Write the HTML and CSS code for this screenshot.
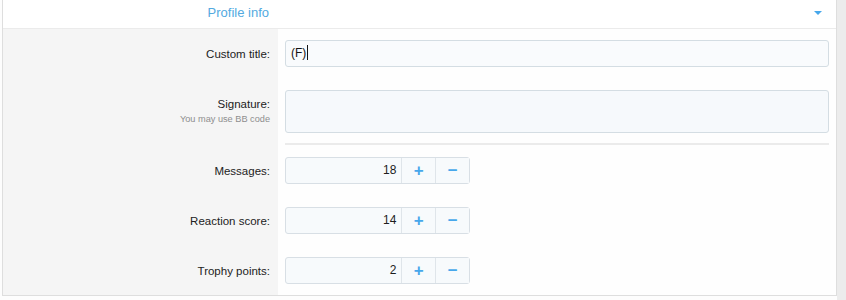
FILE: index.html
```html
<!DOCTYPE html>
<html lang="en">
<head>
  <meta charset="UTF-8">
  <title>Profile info</title>
  <meta name="viewport" content="width=device-width, initial-scale=1" />
  <link rel="stylesheet" href="styles.css">
</head>
<body>
  <div class="panel">
    <h2 class="block-header">
      <span class="header-title">Profile info</span>
      <span class="header-toggle"></span>
    </h2>

    <dl class="form-row">
      <dt><label>Custom title:</label></dt>
      <dd><div class="input-text">(F)<span class="caret"></span></div></dd>
    </dl>

    <dl class="form-row form-row--last">
      <dt>
        <label>Signature:</label>
        <div class="hint">You may use BB code</div>
      </dt>
      <dd><div class="input-area"></div></dd>
    </dl>

    <dl class="form-sep">
      <dt></dt>
      <dd><hr></dd>
    </dl>

    <dl class="form-row form-row--spin">
      <dt><label>Messages:</label></dt>
      <dd>
        <div class="spinbox">
          <span class="spin-value">18</span>
          <button class="spin-btn">+</button>
          <button class="spin-btn">&minus;</button>
        </div>
      </dd>
    </dl>

    <dl class="form-row form-row--spin">
      <dt><label>Reaction score:</label></dt>
      <dd>
        <div class="spinbox">
          <span class="spin-value">14</span>
          <button class="spin-btn">+</button>
          <button class="spin-btn">&minus;</button>
        </div>
      </dd>
    </dl>

    <dl class="form-row form-row--spin">
      <dt><label>Trophy points:</label></dt>
      <dd>
        <div class="spinbox">
          <span class="spin-value">2</span>
          <button class="spin-btn">+</button>
          <button class="spin-btn">&minus;</button>
        </div>
      </dd>
    </dl>
  </div>
  <div class="scroll-track"></div>
</body>
</html>
```

FILE: styles.css
```css
html, body { margin: 0; height: 300px; }
body { display: flex; align-items: flex-start; background: #fdfdfd; font-family: "Liberation Sans", Arial, sans-serif; color: #1d1d1d; overflow: hidden; }

.panel { width: 833px; margin-left: 2px; border-left: 1px solid #dedede; border-right: 1px solid #dedede; border-bottom: 1px solid #dedede; background: #fefefe; }
.scroll-track { width: 9px; height: 300px; background: #ececec; }

.block-header { display: grid; grid-template-columns: 266px 1fr; height: 28px; margin: 0; border-bottom: 1px solid #ebebeb; background: #fff; font-size: 13px; font-weight: normal; line-height: 26px; }
.header-title { text-align: right; color: #53aadf; }
.header-toggle { justify-self: end; width: 0; height: 0; margin: 11px 14px 0 0; border-left: 4px solid transparent; border-right: 4px solid transparent; border-top: 4px solid #47a7eb; }

.form-row, .form-sep { display: grid; grid-template-columns: 275px 1fr; margin: 0; }
.form-row dt, .form-sep dt { background: #f5f5f5; text-align: right; padding: 0 8px 0 0; }
.form-row dd, .form-sep dd { margin: 0; padding: 0 7px; }
.form-row dt { padding-top: 15px; }
.form-row dd { padding-top: 11px; padding-bottom: 12px; }
.form-row--last dd { padding-bottom: 10px; }
.form-row--spin dt { padding-top: 16px; }
.form-row--spin dd { padding-top: 12px; padding-bottom: 11px; }

label { font-size: 11.5px; line-height: 16px; color: #222; }
.hint { font-size: 9.2px; line-height: 14px; color: #8e8e8e; }

.form-sep hr { margin: 0; border: 0; height: 2px; background: #ebebeb; }

.input-text { height: 25px; padding: 0 5px; border: 1px solid #d4dde3; border-radius: 3px; background: #f9fbfd; font-size: 12px; line-height: 25px; color: #141414; }
.caret { display: inline-block; width: 1px; height: 15px; margin-left: 1px; vertical-align: -3px; background: #141414; }
.input-area { height: 41px; border: 1px solid #d4dde3; border-radius: 3px; background: #f6f9fc; }

.spinbox { display: flex; width: 183px; height: 25px; border: 1px solid #d8dfe5; border-radius: 3px; background: #f7fafc; }
.spin-value { width: 111px; padding-right: 5px; text-align: right; font-size: 12px; line-height: 25px; color: #1d1d1d; }
.spin-btn { width: 34px; padding: 0; border: 0; border-left: 1px solid #dfe5ea; background: #f7fafc; color: #47a7eb; font-family: "Liberation Sans", Arial, sans-serif; font-size: 17px; font-weight: bold; line-height: 23px; cursor: pointer; }
```
